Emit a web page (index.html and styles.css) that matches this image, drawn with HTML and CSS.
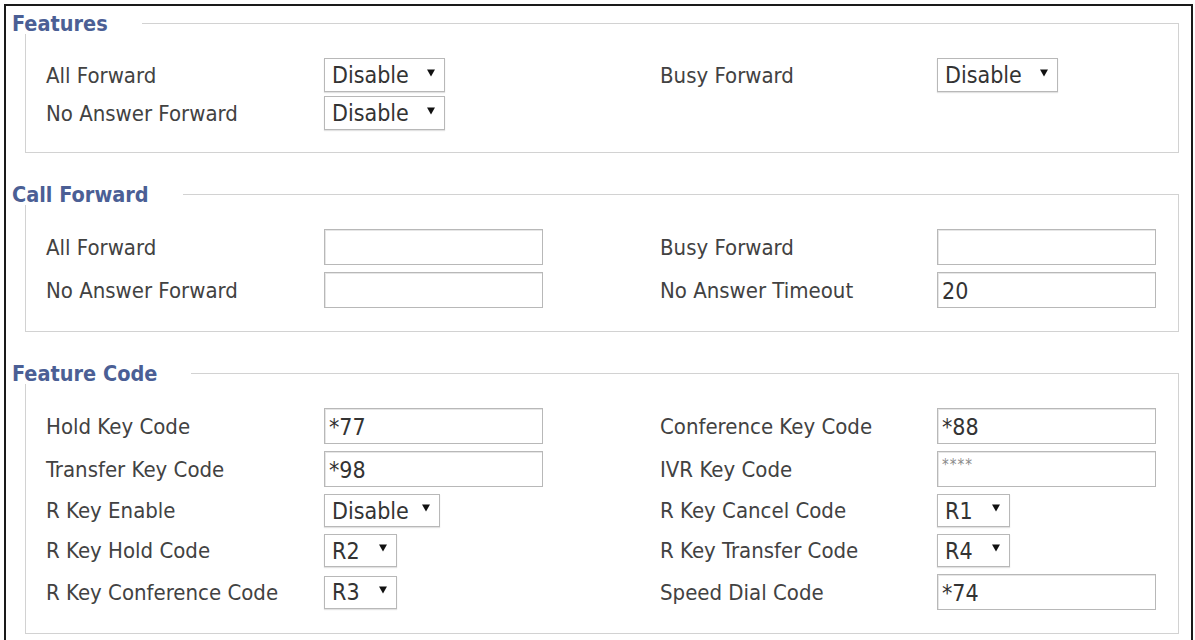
FILE: index.html
```html
<!DOCTYPE html>
<html lang="en">
<head>
<meta charset="utf-8">
<title>Features</title>
<link rel="stylesheet" href="styles.css">
</head>
<body>
<div class="frame">

  <fieldset class="group group-tight">
    <legend class="group-title">Features</legend>
    <div class="form-grid">
      <label class="field-label">All Forward</label>
      <div class="select select-wide"><span>Disable</span><svg class="caret" viewBox="0 0 8 7"><path d="M0 0H8L4 7Z"/></svg></div>
      <label class="field-label">Busy Forward</label>
      <div class="select select-wide"><span>Disable</span><svg class="caret" viewBox="0 0 8 7"><path d="M0 0H8L4 7Z"/></svg></div>

      <label class="field-label">No Answer Forward</label>
      <div class="select select-wide"><span>Disable</span><svg class="caret" viewBox="0 0 8 7"><path d="M0 0H8L4 7Z"/></svg></div>
    </div>
  </fieldset>

  <fieldset class="group">
    <legend class="group-title">Call Forward</legend>
    <div class="form-grid">
      <label class="field-label">All Forward</label>
      <input class="text-input" type="text" value="">
      <label class="field-label">Busy Forward</label>
      <input class="text-input" type="text" value="">

      <label class="field-label">No Answer Forward</label>
      <input class="text-input" type="text" value="">
      <label class="field-label">No Answer Timeout</label>
      <input class="text-input" type="text" value="20">
    </div>
  </fieldset>

  <fieldset class="group">
    <legend class="group-title">Feature Code</legend>
    <div class="form-grid">
      <label class="field-label">Hold Key Code</label>
      <input class="text-input" type="text" value="*77">
      <label class="field-label">Conference Key Code</label>
      <input class="text-input" type="text" value="*88">

      <label class="field-label">Transfer Key Code</label>
      <input class="text-input" type="text" value="*98">
      <label class="field-label">IVR Key Code</label>
      <input class="text-input masked" type="text" value="****">

      <label class="field-label">R Key Enable</label>
      <div class="select select-mid"><span>Disable</span><svg class="caret" viewBox="0 0 8 7"><path d="M0 0H8L4 7Z"/></svg></div>
      <label class="field-label">R Key Cancel Code</label>
      <div class="select select-short"><span>R1</span><svg class="caret" viewBox="0 0 8 7"><path d="M0 0H8L4 7Z"/></svg></div>

      <label class="field-label">R Key Hold Code</label>
      <div class="select select-short"><span>R2</span><svg class="caret" viewBox="0 0 8 7"><path d="M0 0H8L4 7Z"/></svg></div>
      <label class="field-label">R Key Transfer Code</label>
      <div class="select select-short"><span>R4</span><svg class="caret" viewBox="0 0 8 7"><path d="M0 0H8L4 7Z"/></svg></div>

      <label class="field-label">R Key Conference Code</label>
      <div class="select select-short"><span>R3</span><svg class="caret" viewBox="0 0 8 7"><path d="M0 0H8L4 7Z"/></svg></div>
      <label class="field-label">Speed Dial Code</label>
      <input class="text-input" type="text" value="*74">
    </div>
  </fieldset>

</div>
</body>
</html>
```

FILE: styles.css
```css
html, body {
  margin: 0;
  padding: 0;
  background: #ffffff;
}

body {
  font-family: "DejaVu Sans Condensed", "DejaVu Sans", sans-serif;
  color: #3a3a3a;
  overflow: hidden;
}

/* page frame: dark rule on top and sides, open at the bottom */
.frame {
  margin: 4px 2px 0 4px;
  border: 2px solid #1a1a1a;
  border-bottom: none;
  padding: 6px 12px 40px 19px;
  min-height: 700px;
}

.group {
  margin: 0 0 30px 0;
  padding: 24px 20px 23px 20px;
  border: 1px solid #d2d2d2;
  min-width: 0;
}

.group-tight {
  padding-bottom: 22px;
}

.group-title {
  margin-left: -34px;
  padding: 0 34px 0 0;
  height: 22px;
  line-height: 23px;
  background: #ffffff;
  font-family: "DejaVu Sans Condensed", "DejaVu Sans", sans-serif;
  font-weight: bold;
  font-size: 21.5px;
  color: #4b5f95;
}

.form-grid {
  display: grid;
  grid-template-columns: 278px 336px 277px 1fr;
  align-items: center;
  row-gap: 7px;
}

.group-tight .form-grid {
  row-gap: 4px;
}

.field-label {
  font-size: 22px;
  color: #424242;
  white-space: nowrap;
}

.text-input {
  box-sizing: border-box;
  width: 219px;
  height: 36px;
  margin: 0;
  padding: 2px 5px 0 4px;
  border: 1px solid #b8b8b8;
  box-shadow: inset 1px 1px 0 #e6e6e6;
  background: #ffffff;
  font-family: "DejaVu Sans Condensed", "DejaVu Sans", sans-serif;
  font-size: 23px;
  color: #333333;
  outline: none;
}

.text-input.masked {
  color: #8a8a8a;
  font-size: 15px;
  padding-bottom: 10px;
  letter-spacing: 1px;
}

.select {
  box-sizing: border-box;
  height: 34px;
  display: flex;
  align-items: center;
  justify-content: space-between;
  padding: 0 9px 0 7px;
  border: 1px solid #b8b8b8;
  box-shadow: 0 1px 1px #e2e2e2;
  background: #ffffff;
  font-size: 23px;
  color: #333333;
}

.select-wide { width: 121px; }
.select-mid { width: 116px; height: 33px; }
.select-short { width: 73px; height: 33px; }

.caret {
  width: 8px;
  height: 8px;
  margin-top: -5px;
  fill: #111111;
  flex: none;
}
```
